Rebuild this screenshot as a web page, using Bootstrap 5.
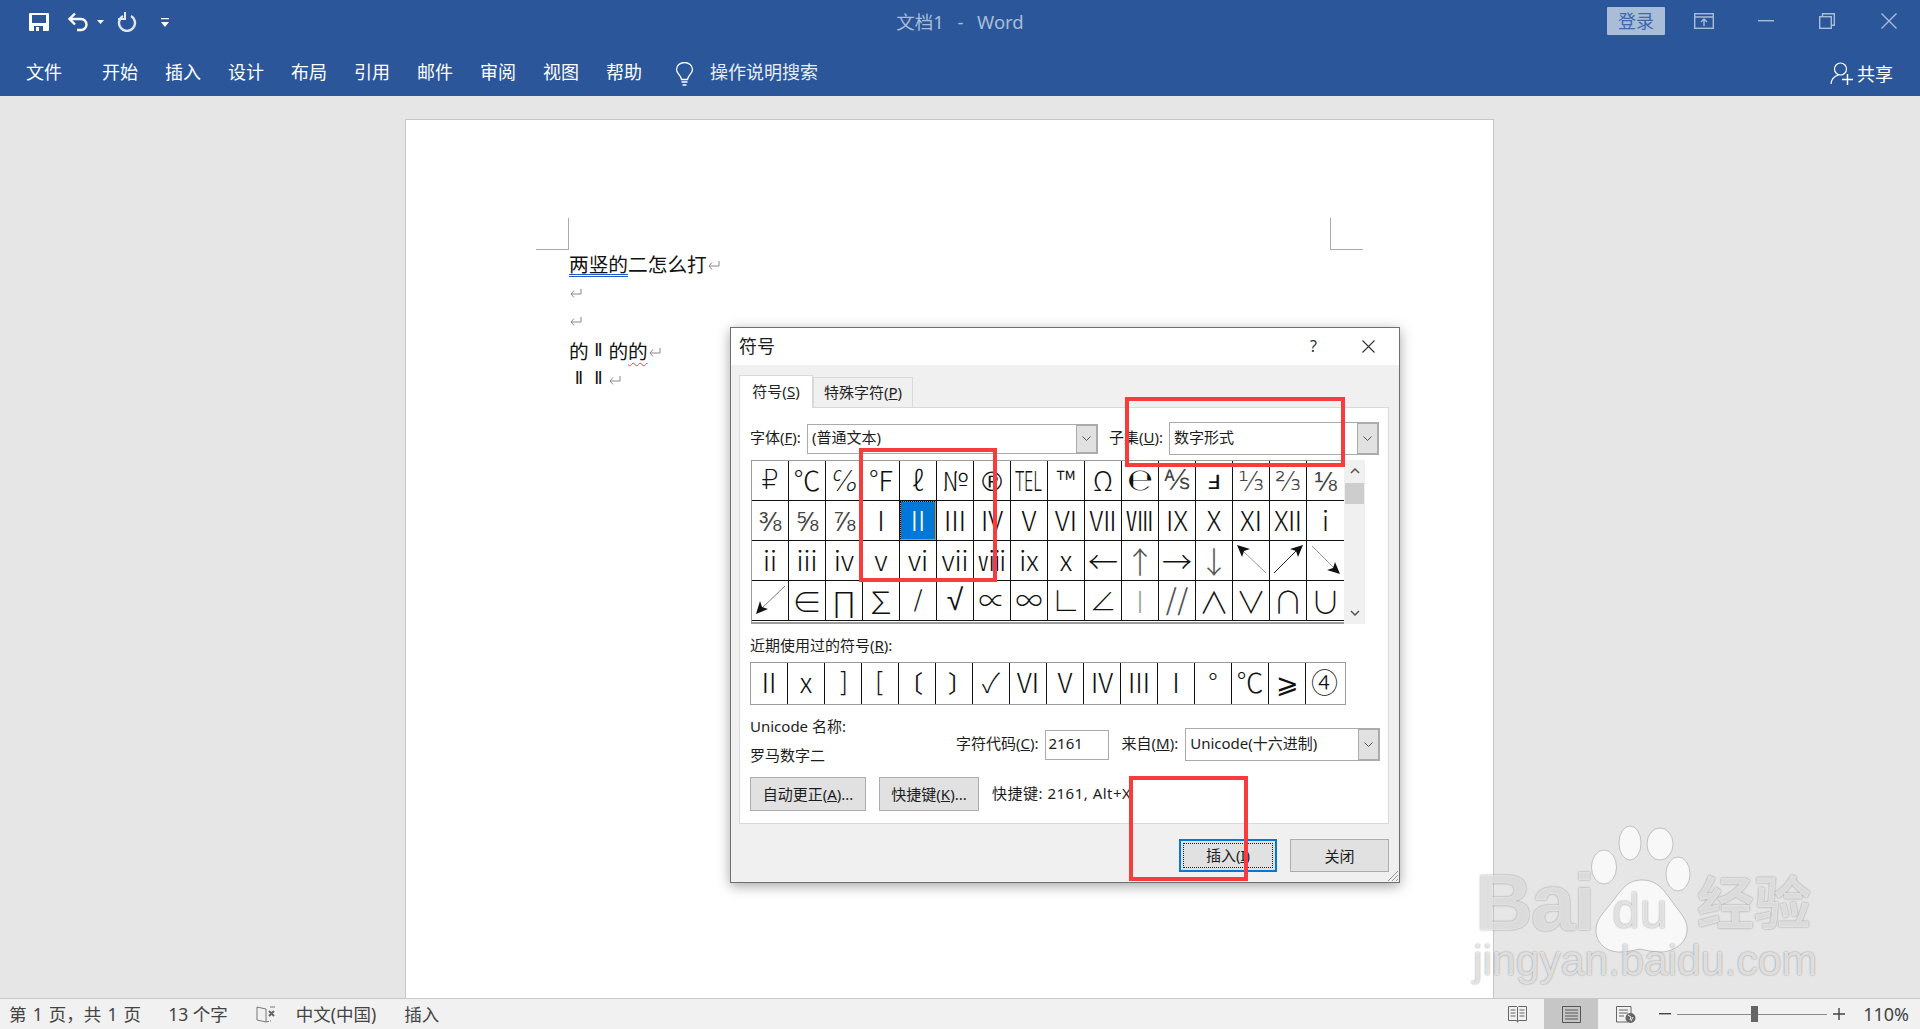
<!DOCTYPE html>
<html lang="zh">
<head>
<meta charset="utf-8">
<title>文档1 - Word</title>
<link href="https://cdn.jsdelivr.net/npm/bootstrap@5.3.0/dist/css/bootstrap.min.css" rel="stylesheet">
<style>
html,body{height:100%;margin:0;overflow:hidden}
body{font-family:"Noto Sans","Noto Sans CJK SC",sans-serif;color:#222;background:#e6e6e6;position:relative}
.wd-head{background:#2b579a;color:#fff;height:96px;flex:none}
.wd-row1{height:44px}
.wd-row2{height:52px;padding-top:7px;font-size:18px;line-height:42px}
.qat{flex:1 1 0}
.ml-save{margin-left:29px}
.ml-undo{margin-left:18px}.ml-caret{margin-left:6px}.ml-redo{margin-left:13px}.ml-cust{margin-left:24px}
.wd-title{color:#a9bdd8;font-size:18.5px;line-height:44px;word-spacing:2px}
.wd-ctl{flex:1 1 0;color:#a9bdd8;margin-bottom:2px}
.login{background:#a9bdd8;color:#3d69ac;width:58px;height:28px;line-height:28px;font-size:18px;text-align:center;border-radius:1px}
.ml-rib{margin-left:29px}.ml-min{margin-left:44px}.ml-res{margin-left:45px}.ml-x{margin-left:46px;margin-right:23px}
.tab-file{margin-left:26px;margin-right:40px}
.tabs{gap:27px}
.tell{margin-left:33px}
.tell-t{margin-left:16px;margin-bottom:3px;color:#e8edf5}
.share{margin-right:27px}
.share svg{margin-right:3px}
.wd-main{background:#e6e6e6;padding:23px 0 0 405px;min-height:0;overflow:hidden}
.page{width:1089px;height:900px;background:#fff;border:1px solid #c6c6c6;border-bottom:0;padding:98px 130px 0}
.corner{width:33px;height:32px;border-bottom:1px solid #aaa}
.corner.l{border-right:1px solid #aaa}
.corner.r{border-left:1px solid #aaa}
.doc{margin-left:33px;font-size:19.7px;line-height:28px;color:#111;font-family:"Noto Sans CJK SC",sans-serif}
.doc p{margin:0;height:28px;white-space:nowrap}
.doc p.gap3{margin-top:3px}
.ul-blue{display:inline-block;line-height:21px;border-bottom:3px double #2459c9}
.ul-red{text-decoration:underline wavy #e8404a 1px;text-underline-offset:3px}
.rn{display:inline-block;width:19.7px;text-align:center;font-family:"DejaVu Sans",sans-serif;font-size:17px;line-height:26px;vertical-align:top}
.ret{margin-left:1px;vertical-align:2px}
.wd-status{height:31px;flex:none;background:#f1f1f1;border-top:1px solid #c8c8c8;font-size:17.5px;color:#444;padding-left:9px;line-height:28px}
.s0{word-spacing:1.6px}
.s1{margin-left:27px}.s2{margin-left:28px}.s3{margin-left:20px}.s4{margin-left:28px}
.stat-r{padding-right:11px}
.view-on{background:#c6c6c6;width:54px;height:30px;margin-left:17px}
.ml18{margin-left:18px}.ml23{margin-left:23px}.ml6{margin-left:6px}.ml16{margin-left:16px}
.zoom-track{width:150px;height:1px;background:#8c8c8c;margin-left:6px;position:relative}
.zoom-thumb{position:absolute;left:74px;top:-8px;width:7px;height:16px;background:#666}
.zoom-lbl{width:48px;font-size:18px;text-align:right;white-space:nowrap}

.dlg{position:absolute;left:730px;top:327px;width:670px;height:556px;background:#f0f0f0;border:1px solid #6f6f6f;box-shadow:0 3px 12px rgba(0,0,0,.35);font-size:15px;color:#1c1c1c;line-height:1.2}
.dlg-h{background:#fff;height:37px;padding-left:8px;font-size:18px}
.dlg-q{margin-right:45px;font-size:16px;color:#333}
.dlg-x{margin-right:24px}
.dlg-b{padding:10px 10px 0 8px}
.dnav{height:32px;align-items:flex-end;position:relative;z-index:1;flex-wrap:nowrap}
.dtab{height:30px;width:100px;line-height:28px;text-align:center;border:1px solid #d9d9d9;border-bottom:0;background:#f0f0f0;font-size:15px;color:#222}
.dtab.active{height:33px;width:74px;background:#fff;margin-bottom:-1px;line-height:31px}
.panel{height:417px;background:#fff;border:1px solid #d9d9d9;padding:14px 0 0 10px}
.f-row{height:33px}
.lbl-a{width:57px;white-space:nowrap;padding-bottom:3px}
.lbl-b{width:60px;margin-left:11px;white-space:nowrap;padding-bottom:3px}
.sel{background:#fff;border:1px solid #ababab;padding:0 0 3px 4px;white-space:nowrap;position:relative}
.sel-arrow{width:22px;background:#e1e1e1;border-left:1px solid #ababab;border-right:2px solid #ababab;border-top:2px solid #ababab;border-bottom:2px solid #ababab;margin:-1px -1px -4px auto;align-self:stretch}
.sel-1{width:291px;height:30px}
.sel-2{width:210px;height:33px}
.sel-3{width:195px;height:33px}
.sym-wrap{margin-top:5px;margin-left:1px;width:614px;height:164px}
.sym-grid{width:593px;height:164px;border:solid #9c9c9c;border-width:1px 0 2px 1px;padding-bottom:1px;background:#fff}
.sym-g{display:grid;grid-template-columns:repeat(16,37px);grid-auto-rows:40px}
.sc{border-right:1px solid #111;border-bottom:1px solid #111;text-align:center;font-family:"Noto Sans CJK SC","DejaVu Sans",sans-serif;font-weight:300;font-size:27px;line-height:38px;color:#111;white-space:nowrap}
.sc:nth-child(16n){border-right:0}
.sc.dj{font-family:"DejaVu Sans",sans-serif;font-weight:200}
.sc.fr{color:#444}
.sc.w4{font-weight:400}
.sc.fs30{font-size:30px}
.sc.fs34{font-size:34px}
.sc.gray{color:#999}
.sc.mid{color:#555}
.sc svg{display:block}
.tel{display:inline-block;transform:scaleX(.62);transform-origin:center;font-family:"Noto Sans",sans-serif;margin:0 -10px}
.sc.sel-cell{background:#0078d7;color:#fff;outline:1px dotted #000;outline-offset:-1px;box-shadow:inset 0 0 0 1px #f08a1d}
.scroll{width:21px;height:164px;background:#f0f0f0}
.scroll-thumb{width:19px;height:21px;background:#cdcdcd;margin:9px auto 0}
.rec-l{margin-top:12px;height:26px}
.rec{width:596px;height:43px;border:1px solid #9c9c9c;background:#fff;display:grid;grid-template-columns:repeat(16,37px)}
.rec .sc{border-bottom:0;line-height:38px}
.rec .sc:nth-child(16){border-right:0}
.sc.br-o{font-size:24px;font-weight:400;padding-right:12px}
.sc.br-c{font-size:24px;font-weight:400;padding-left:12px}
.u-row{margin-top:15px;height:45px}
.u-left{width:206px;margin-top:-2px}
.u-left div{height:16px;line-height:16px}
.u-left div+div{margin-top:13px}
.u-right{margin-top:8px;height:33px}
.u-right>span{padding-bottom:3px}
.ucode{width:64px;height:30px;border:1px solid #ababab;background:#fff;padding-left:3px;margin-left:6px;line-height:24px}
.lbl-m{margin-left:13px;margin-right:7px;white-space:nowrap}
.b-row{margin-top:12px}
.xbtn{background:#e1e1e1;border:1px solid #adadad;border-radius:0;color:#1c1c1c;font-size:15px;padding:0;height:34px;line-height:30px}
.w115{width:116px}.w100{width:100px;margin-left:13px}
.sc-txt{margin-left:13px;white-space:nowrap;padding-bottom:2px;letter-spacing:.5px}
.foot{margin-top:15px;padding-right:0;gap:13px}
.foot .xbtn{width:99px;height:33px}
.foot .primary{width:98px;border:2px solid #0078d7;position:relative}
.foot .primary span{display:block;height:25px;line-height:22px;margin:2px;border:1px dotted #222}
.grip{position:absolute;right:1px;bottom:1px}
.red{position:absolute;border:4px solid #f83b3b;z-index:5;pointer-events:none}
.r-a{left:859px;top:448px;width:138px;height:134px}
.r-b{left:1125px;top:397px;width:220px;height:70px}
.r-c{left:1129px;top:776px;width:119px;height:105px}
.wm{position:absolute;left:1470px;top:820px;width:360px;height:170px;z-index:6;pointer-events:none;color:rgba(255,255,255,.72);text-shadow:0 0 2px rgba(0,0,0,.32),0 0 1px rgba(0,0,0,.18);font-family:"Liberation Sans",sans-serif;white-space:nowrap}
.wm span{position:absolute;line-height:1}
.wm-paw{position:absolute;left:0;top:0}
.wm .wm-bai{left:5px;top:50px;font-size:80px;font-weight:700;letter-spacing:-2px;line-height:66px}
.wm-du{left:142px;top:66px;font-size:50px}
.wm-jy{left:227px;top:51px;font-size:57px;font-weight:700;font-family:"Noto Sans CJK SC",sans-serif}
.wm-url{left:3px;top:119px;font-size:42.7px}
</style>
</head>
<body class="d-flex flex-column">
<header class="wd-head d-flex flex-column">
  <div class="wd-row1 d-flex align-items-center">
    <div class="qat d-flex align-items-center">
      <svg class="ml-save" width="20" height="18" viewBox="0 0 20 18"><path fill="#fff" fill-rule="evenodd" d="M1 0h18a1 1 0 0 1 1 1v16a1 1 0 0 1-1 1H1a1 1 0 0 1-1-1V1a1 1 0 0 1 1-1zM3 2v8h14V2zM5 13v5h9v-5zM7 14h3v4H7z"/></svg>
      <svg class="ml-undo" width="24" height="20" viewBox="0 0 24 20" fill="none" stroke="#fff" stroke-width="2.4"><path d="M8 1.500 2.500 7 8 12.500"/><path d="M3 7h11a5.500 5.500 0 0 1 0 11h-4"/></svg>
      <svg class="ml-caret" width="7" height="4" viewBox="0 0 7 4"><path fill="#fff" d="M0 0h7L3.500 4z"/></svg>
      <svg class="ml-redo" width="20" height="20" viewBox="0 0 20 20" fill="none" stroke="#dfe6f0" stroke-width="2.4"><path d="M6 4a8 8 0 1 0 8 0"/><path d="M8 0v7H1" stroke-width="2"/></svg>
      <svg class="ml-cust" width="8" height="9" viewBox="0 0 8 9"><path fill="#fff" d="M0 0h8v1.200H0zM0 4h8L4 9z"/></svg>
    </div>
    <div class="wd-title">文档1&nbsp; -&nbsp; Word</div>
    <div class="wd-ctl d-flex align-items-center justify-content-end">
      <div class="login">登录</div>
      <svg class="ml-rib" width="20" height="16" viewBox="0 0 20 16" fill="none" stroke="#a9bdd8" stroke-width="1.4"><rect x=".7" y=".7" width="18.600" height="14.600"/><path d="M1 4h18M10 13V6.500M7 9l3-3 3 3"/></svg>
      <svg class="ml-min" width="16" height="2" viewBox="0 0 16 2"><path fill="#a9bdd8" d="M0 0h16v1.400H0z"/></svg>
      <svg class="ml-res" width="16" height="16" viewBox="0 0 16 16" fill="none" stroke="#a9bdd8" stroke-width="1.4"><rect x=".7" y="3.700" width="11.600" height="11.600"/><path d="M3.500 3.500V.7h11.800v11.600h-3"/></svg>
      <svg class="ml-x" width="16" height="16" viewBox="0 0 16 16" fill="none" stroke="#a9bdd8" stroke-width="1.4"><path d="M.5.500l15 15M15.500.5l-15 15"/></svg>
    </div>
  </div>
  <div class="wd-row2 d-flex">
    <span class="tab-file">文件</span>
    <div class="tabs d-flex">
      <span>开始</span><span>插入</span><span>设计</span><span>布局</span><span>引用</span><span>邮件</span><span>审阅</span><span>视图</span><span>帮助</span>
    </div>
    <div class="tell d-flex align-items-center">
      <svg width="19" height="24" viewBox="0 0 19 24" fill="none" stroke="#fff" stroke-width="1.3"><path d="M6.500 17.500C6 13 1.500 11.500 1.500 7.500a8 7 0 0 1 16 0c0 4-4.500 5.500-5 10z"/><path d="M6.500 20h6M7.500 23h4" stroke-width="1.6"/></svg>
      <span class="tell-t">操作说明搜索</span>
    </div>
    <div class="share ms-auto d-flex align-items-center">
      <svg width="24" height="23" viewBox="0 0 24 23" fill="none" stroke="#fff" stroke-width="1.2"><circle cx="10.500" cy="7" r="6"/><path d="M1 22c.5-5 3.500-8 7.500-9"/><path d="M12 17.500h11M17.500 12v11" stroke-width="1.400"/></svg>
      <span>共享</span>
    </div>
  </div>
</header>

<main class="wd-main flex-grow-1">
  <div class="page">
    <div class="d-flex justify-content-between">
      <div class="corner l"></div>
      <div class="corner r"></div>
    </div>
    <div class="doc">
      <p><span class="ul-blue">两竖的</span>二怎么打<svg class="ret" width="12" height="9" viewBox="0 0 12 9" fill="none" stroke="#888"><path d="M11 0v5H1M4 1.500 1 5l3 3.500"/></svg></p>
      <p><svg class="ret" width="12" height="9" viewBox="0 0 12 9" fill="none" stroke="#888"><path d="M11 0v5H1M4 1.500 1 5l3 3.500"/></svg></p>
      <p><svg class="ret" width="12" height="9" viewBox="0 0 12 9" fill="none" stroke="#888"><path d="M11 0v5H1M4 1.500 1 5l3 3.500"/></svg></p>
      <p class="gap3">的<span class="rn">Ⅱ</span>的<span class="ul-red">的</span><svg class="ret" width="12" height="9" viewBox="0 0 12 9" fill="none" stroke="#888"><path d="M11 0v5H1M4 1.500 1 5l3 3.500"/></svg></p>
      <p><span class="rn">Ⅱ</span><span class="rn">Ⅱ</span><svg class="ret" width="12" height="9" viewBox="0 0 12 9" fill="none" stroke="#888"><path d="M11 0v5H1M4 1.500 1 5l3 3.500"/></svg></p>
    </div>
  </div>
</main>

<footer class="wd-status d-flex align-items-center">
  <span class="s0">第 1 页，共 1 页</span>
  <span class="s1">13 个字</span>
  <svg class="s2" width="20" height="17" viewBox="0 0 20 17" fill="none" stroke="#777"><path d="M10 3 1 1v13l9 2 3-.7M10 3v13"/><path d="M14 1h5M14 15h1"/><path d="M13 5l5 5M18 5l-5 5" stroke-width="2" stroke="#666"/></svg>
  <span class="s3">中文(中国)</span>
  <span class="s4">插入</span>
  <div class="ms-auto stat-r d-flex align-items-center">
    <svg width="19" height="17" viewBox="0 0 19 17" fill="none" stroke="#666"><path d="M.5.500h8l1 1 1-1h8v14h-8l-1 1.500-1-1.500h-8zM9.500 1.500v15M2.500 4h5M2.500 7h5M2.500 10h5M11.500 4h5M11.500 7h5M11.500 10h5"/></svg>
    <div class="view-on d-flex align-items-center justify-content-center">
      <svg width="19" height="17" viewBox="0 0 19 17" fill="none" stroke="#555"><path d="M.5.500h18v16H.5zM3 4h13M3 7h13M3 10h13M3 13h13"/></svg>
    </div>
    <svg class="ml18" width="20" height="17" viewBox="0 0 20 17" fill="none" stroke="#666"><path d="M12 16H.5V.5H15v7M3 4h9M3 7h9M3 10h5"/><circle cx="14.500" cy="12" r="5" fill="#666" stroke="none"/><path d="M12 9l3 2-1 3M17 11l-2 4" stroke="#f1f1f1"/></svg>
    <svg class="ml23" width="12" height="2" viewBox="0 0 12 2"><path fill="#444" d="M0 0h12v1.400H0z"/></svg>
    <div class="zoom-track"><div class="zoom-thumb"></div></div>
    <svg class="ml6" width="12" height="12" viewBox="0 0 12 12"><path fill="#444" d="M0 5.300h12v1.400H0zM5.300 0h1.400v12H5.300z"/></svg>
    <span class="ml16 zoom-lbl">110%</span>
  </div>
</footer>

<section class="dlg" role="dialog">
  <div class="dlg-h d-flex align-items-center">
    <span>符号</span>
    <span class="dlg-q ms-auto">?</span>
    <svg class="dlg-x" width="13" height="13" viewBox="0 0 13 13" fill="none" stroke="#333" stroke-width="1.100"><path d="M.5.500l12 12M12.500.5l-12 12"/></svg>
  </div>
  <div class="dlg-b">
    <ul class="nav dnav">
      <li class="dtab active">符号(<u>S</u>)</li>
      <li class="dtab">特殊字符(<u>P</u>)</li>
    </ul>
    <div class="panel">
      <div class="f-row d-flex align-items-center">
        <span class="lbl-a">字体(<u>F</u>):</span>
        <div class="sel sel-1 d-flex align-items-center">(普通文本)<span class="sel-arrow d-flex align-items-center justify-content-center"><svg width="9" height="5" viewBox="0 0 9 5" fill="none" stroke="#555"><path d="M.5.500l4 4 4-4"/></svg></span></div>
        <span class="lbl-b">子集(<u>U</u>):</span>
        <div class="sel sel-2 d-flex align-items-center">数字形式<span class="sel-arrow d-flex align-items-center justify-content-center"><svg width="9" height="5" viewBox="0 0 9 5" fill="none" stroke="#555"><path d="M.5.500l4 4 4-4"/></svg></span></div>
      </div>
      <div class="sym-wrap d-flex">
        <div class="sym-grid">
          <div class="sym-g">
            <div class="sc dj">₽</div><div class="sc">℃</div><div class="sc">℅</div><div class="sc">℉</div><div class="sc">ℓ</div><div class="sc">№</div><div class="sc w4">℗</div><div class="sc"><span class="tel">TEL</span></div><div class="sc">™</div><div class="sc">Ω</div><div class="sc dj fs30">℮</div><div class="sc dj fr">⅍</div><div class="sc dj">ⅎ</div><div class="sc fr">⅓</div><div class="sc fr">⅔</div><div class="sc fr">⅛</div>
            <div class="sc fr">⅜</div><div class="sc fr">⅝</div><div class="sc fr">⅞</div><div class="sc">Ⅰ</div><div class="sc sel-cell">Ⅱ</div><div class="sc">Ⅲ</div><div class="sc">Ⅳ</div><div class="sc">Ⅴ</div><div class="sc">Ⅵ</div><div class="sc">Ⅶ</div><div class="sc">Ⅷ</div><div class="sc">Ⅸ</div><div class="sc">Ⅹ</div><div class="sc">Ⅺ</div><div class="sc">Ⅻ</div><div class="sc">ⅰ</div>
            <div class="sc">ⅱ</div><div class="sc">ⅲ</div><div class="sc">ⅳ</div><div class="sc">ⅴ</div><div class="sc">ⅵ</div><div class="sc">ⅶ</div><div class="sc">ⅷ</div><div class="sc">ⅸ</div><div class="sc">ⅹ</div><div class="sc fs30">←</div><div class="sc fs30 mid">↑</div><div class="sc fs30">→</div><div class="sc fs30 mid">↓</div>
            <div class="sc" role="img" aria-label="↖"><svg width="36" height="39" viewBox="0 0 36 39"><path d="M33 32 9 9" stroke="#999" fill="none"/><path fill="#111" d="M4 4 17 8 11 10 9 16z"/></svg></div>
            <div class="sc" role="img" aria-label="↗"><svg width="36" height="39" viewBox="0 0 36 39"><path d="M4 32 28 8" stroke="#222" fill="none"/><path fill="#111" d="M33 4 20 8 26 10 28 16z"/></svg></div>
            <div class="sc" role="img" aria-label="↘"><svg width="36" height="39" viewBox="0 0 36 39"><path d="M5 5 28 28" stroke="#999" fill="none"/><path fill="#111" d="M33 33 20 29 26 27 28 21z"/></svg></div>
            <div class="sc" role="img" aria-label="↙"><svg width="36" height="39" viewBox="0 0 36 39"><path d="M33 5 9 28" stroke="#777" fill="none"/><path fill="#111" d="M4 33 8 20 10 26 16 28z"/></svg></div>
            <div class="sc fs30">∈</div><div class="sc fs30">∏</div><div class="sc fs30">∑</div><div class="sc dj">∕</div><div class="sc dj fs30">√</div><div class="sc">∝</div><div class="sc">∞</div><div class="sc">∟</div><div class="sc">∠</div><div class="sc fs30 gray">∣</div><div class="sc dj fs34 mid">∕∕</div><div class="sc fs30">∧</div><div class="sc fs30">∨</div><div class="sc fs30">∩</div><div class="sc fs30">∪</div>
          </div>
        </div>
        <div class="scroll d-flex flex-column align-items-center">
          <svg class="mt-2" width="10" height="6" viewBox="0 0 10 6" fill="none" stroke="#555" stroke-width="1.500"><path d="M1 5l4-4 4 4"/></svg>
          <div class="scroll-thumb"></div>
          <svg class="mt-auto mb-2" width="10" height="6" viewBox="0 0 10 6" fill="none" stroke="#555" stroke-width="1.500"><path d="M1 1l4 4 4-4"/></svg>
        </div>
      </div>
      <div class="rec-l">近期使用过的符号(<u>R</u>):</div>
      <div class="rec">
        <div class="sc">Ⅱ</div><div class="sc">ⅹ</div><div class="sc dj">]</div><div class="sc dj">[</div><div class="sc br-o">〔</div><div class="sc br-c">〕</div><div class="sc">✓</div><div class="sc">Ⅵ</div><div class="sc">Ⅴ</div><div class="sc">Ⅳ</div><div class="sc">Ⅲ</div><div class="sc">Ⅰ</div><div class="sc">°</div><div class="sc">℃</div><div class="sc">⩾</div><div class="sc">④</div>
      </div>
      <div class="u-row d-flex">
        <div class="u-left">
          <div>Unicode 名称:</div>
          <div>罗马数字二</div>
        </div>
        <div class="u-right d-flex align-items-center">
          <span>字符代码(<u>C</u>):</span>
          <div class="ucode">2161</div>
          <span class="lbl-m">来自(<u>M</u>):</span>
          <div class="sel sel-3 d-flex align-items-center">Unicode(十六进制)<span class="sel-arrow d-flex align-items-center justify-content-center"><svg width="9" height="5" viewBox="0 0 9 5" fill="none" stroke="#555"><path d="M.5.500l4 4 4-4"/></svg></span></div>
        </div>
      </div>
      <div class="b-row d-flex align-items-center">
        <button type="button" class="btn xbtn w115">自动更正(<u>A</u>)...</button>
        <button type="button" class="btn xbtn w100">快捷键(<u>K</u>)...</button>
        <span class="sc-txt">快捷键: 2161, Alt+X</span>
      </div>
    </div>
    <div class="foot d-flex justify-content-end">
      <button type="button" class="btn xbtn primary"><span>插入(<u>I</u>)</span></button>
      <button type="button" class="btn xbtn">关闭</button>
    </div>
  </div>
  <svg class="grip" width="11" height="11" viewBox="0 0 11 11" fill="none" stroke="#999"><path d="M11 1 1 11M11 5l-6 6M11 9l-2 2"/></svg>
</section>

<div class="red r-a"></div>
<div class="red r-b"></div>
<div class="red r-c"></div>

<div class="wm" aria-label="Baidu 经验">
  <svg class="wm-paw" width="360" height="170" viewBox="0 0 360 170" fill="rgba(255,255,255,.72)" stroke="rgba(0,0,0,.2)"><ellipse cx="134" cy="47" rx="12.500" ry="17"/><ellipse cx="160" cy="23" rx="11" ry="17"/><ellipse cx="190" cy="24" rx="13" ry="16"/><ellipse cx="208" cy="54" rx="12" ry="17"/><path d="M172 60c18 0 24 14 34 27 7 9 12 15 11 24-1 13-14 21-27 21-8 0-14-2-20-3-7 1-12 3-20 3-14 0-24-9-24-22 0-9 6-16 13-24 10-12 16-26 33-26z"/></svg>
  <span class="wm-bai">Bai</span>
  <span class="wm-du">du</span>
  <span class="wm-jy">经验</span>
  <span class="wm-url">jingyan.baidu.com</span>
</div>
<script src="https://cdn.jsdelivr.net/npm/bootstrap@5.3.0/dist/js/bootstrap.bundle.min.js"></script>
</body>
</html>
